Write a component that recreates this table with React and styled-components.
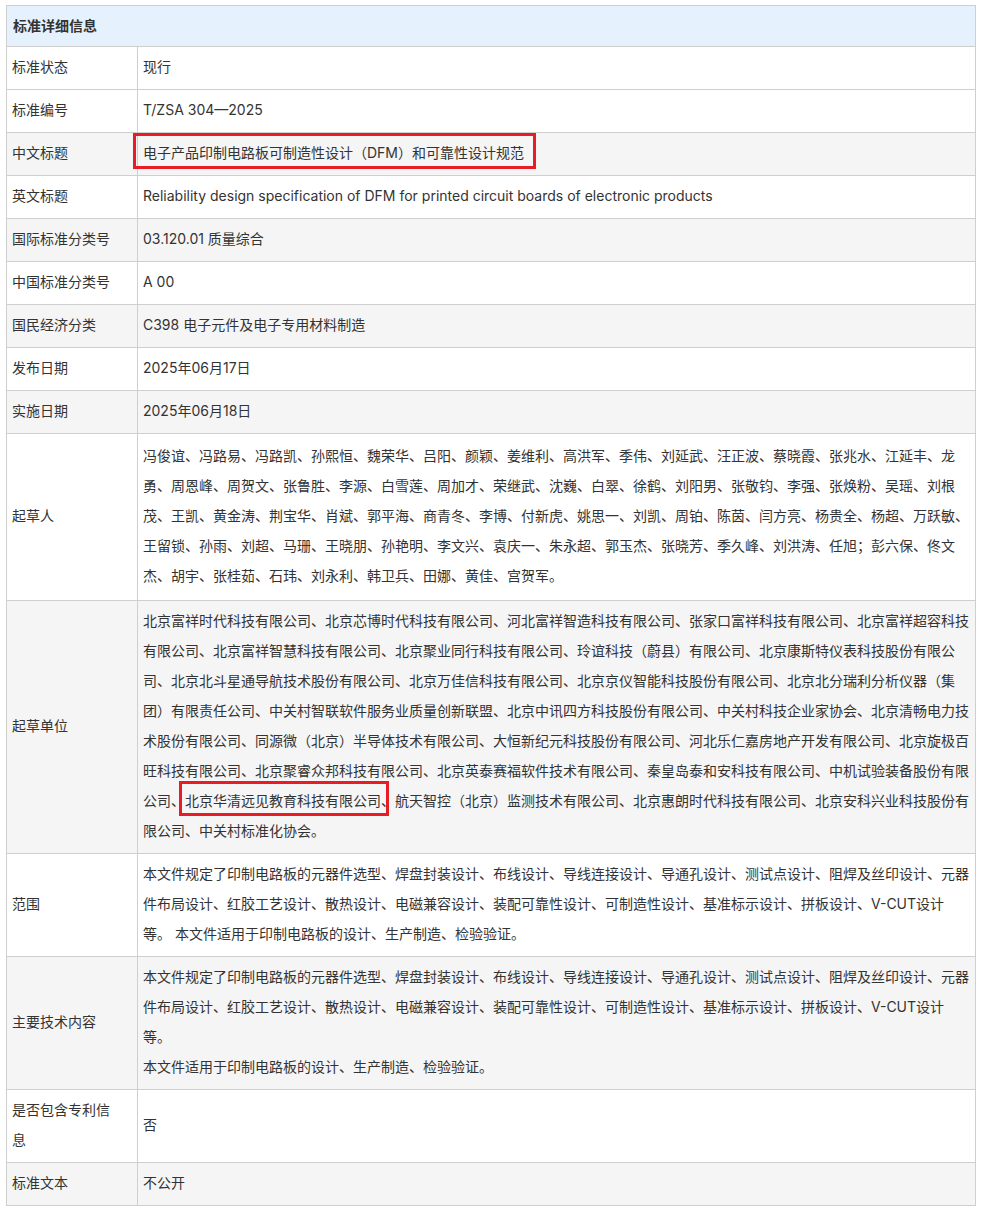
import React from "react";
import styled, { createGlobalStyle } from "styled-components";

const GlobalStyle = createGlobalStyle`
  body {
    margin: 0;
    background: #fff;
    font-family: Inter, "Noto Sans CJK SC", sans-serif;
    color: #333;
  }
`;

const drafters =
  "冯俊谊、冯路易、冯路凯、孙熙恒、魏荣华、吕阳、颜颖、姜维利、高洪军、季伟、刘延武、汪正波、蔡晓霞、张兆水、江延丰、龙勇、周恩峰、周贺文、张鲁胜、李源、白雪莲、周加才、荣继武、沈巍、白翠、徐鹤、刘阳男、张敬钧、李强、张焕粉、吴瑶、刘根茂、王凯、黄金涛、荆宝华、肖斌、郭平海、商青冬、李博、付新虎、姚思一、刘凯、周铂、陈茵、闫方亮、杨贵全、杨超、万跃敏、王留锁、孙雨、刘超、马珊、王晓朋、孙艳明、李文兴、袁庆一、朱永超、郭玉杰、张晓芳、季久峰、刘洪涛、任旭；彭六保、佟文杰、胡宇、张桂茹、石玮、刘永利、韩卫兵、田娜、黄佳、宫贺军。";

const unitsBefore =
  "北京富祥时代科技有限公司、北京芯博时代科技有限公司、河北富祥智造科技有限公司、张家口富祥科技有限公司、北京富祥超容科技有限公司、北京富祥智慧科技有限公司、北京聚业同行科技有限公司、玲谊科技（蔚县）有限公司、北京康斯特仪表科技股份有限公司、北京北斗星通导航技术股份有限公司、北京万佳信科技有限公司、北京京仪智能科技股份有限公司、北京北分瑞利分析仪器（集团）有限责任公司、中关村智联软件服务业质量创新联盟、北京中讯四方科技股份有限公司、中关村科技企业家协会、北京清畅电力技术股份有限公司、同源微（北京）半导体技术有限公司、大恒新纪元科技股份有限公司、河北乐仁嘉房地产开发有限公司、北京旋极百旺科技有限公司、北京聚睿众邦科技有限公司、北京英泰赛福软件技术有限公司、秦皇岛泰和安科技有限公司、中机试验装备股份有限公司、";
const unitsMarked = "北京华清远见教育科技有限公司、";
const unitsAfter =
  "航天智控（北京）监测技术有限公司、北京惠朗时代科技有限公司、北京安科兴业科技股份有限公司、中关村标准化协会。";

const scope =
  "本文件规定了印制电路板的元器件选型、焊盘封装设计、布线设计、导线连接设计、导通孔设计、测试点设计、阻焊及丝印设计、元器件布局设计、红胶工艺设计、散热设计、电磁兼容设计、装配可靠性设计、可制造性设计、基准标示设计、拼板设计、V-CUT设计等。 本文件适用于印制电路板的设计、生产制造、检验验证。";

const Page = styled.div`
  padding: 5px 5px 8px 6px;
`;

const Table = styled.table`
  width: 970px;
  border-collapse: collapse;
  font-size: 14px;
  line-height: 30px;
`;

const HeadCell = styled.th`
  background: #e5f1fd;
  border: 1px solid #cfcfcf;
  height: 39px;
  padding: 0 6px 1px;
  text-align: left;
  font-weight: bold;
  color: #333;
`;

const Row = styled.tr`
  background: ${(p) => (p.$shade ? "#f5f5f5" : "#fff")};
`;

const Label = styled.td`
  width: 111px;
  border: 1px solid #cfcfcf;
  padding: 5px 14px 7px 5px;
  vertical-align: middle;
  color: #333;
`;

const Value = styled.td`
  border: 1px solid #cfcfcf;
  padding: ${(p) => (p.$tall ? "7px 3px 9px 5px" : "5px 3px 7px 5px")};
  vertical-align: middle;
  color: #333;
  word-break: break-all;
`;

// red annotation frame drawn over the text
const Marked = styled.span`
  position: relative;
  &::after {
    content: "";
    position: absolute;
    left: ${(p) => p.$l}px;
    right: ${(p) => p.$r}px;
    top: ${(p) => p.$t}px;
    bottom: ${(p) => p.$b}px;
    border: 3px solid #e81c24;
    pointer-events: none;
  }
`;

const rows = [
  ["标准状态", "现行", false],
  ["标准编号", "T/ZSA 304—2025", false],
  [
    "中文标题",
    <Marked $l={-10} $r={-12} $t={-11} $b={-8}>
      电子产品印制电路板可制造性设计（DFM）和可靠性设计规范
    </Marked>,
    true,
  ],
  [
    "英文标题",
    "Reliability design specification of DFM for printed circuit boards of electronic products",
    false,
  ],
  ["国际标准分类号", "03.120.01 质量综合", true],
  ["中国标准分类号", "A 00", false],
  ["国民经济分类", "C398 电子元件及电子专用材料制造", true],
  ["发布日期", "2025年06月17日", false],
  ["实施日期", "2025年06月18日", true],
];

export default function App() {
  return (
    <Page>
      <GlobalStyle />
      <Table>
        <thead>
          <tr>
            <HeadCell colSpan={2}>标准详细信息</HeadCell>
          </tr>
        </thead>
        <tbody>
          {rows.map(([label, value, shade]) => (
            <Row key={label} $shade={shade}>
              <Label>{label}</Label>
              <Value>{value}</Value>
            </Row>
          ))}
          <Row>
            <Label>起草人</Label>
            <Value $tall>{drafters}</Value>
          </Row>
          <Row $shade>
            <Label>起草单位</Label>
            <Value>
              {unitsBefore}
              <Marked $l={-6} $r={6} $t={-11} $b={-7}>
                {unitsMarked}
              </Marked>
              {unitsAfter}
            </Value>
          </Row>
          <Row>
            <Label>范围</Label>
            <Value>{scope}</Value>
          </Row>
          <Row $shade>
            <Label>主要技术内容</Label>
            <Value>
              本文件规定了印制电路板的元器件选型、焊盘封装设计、布线设计、导线连接设计、导通孔设计、测试点设计、阻焊及丝印设计、元器件布局设计、红胶工艺设计、散热设计、电磁兼容设计、装配可靠性设计、可制造性设计、基准标示设计、拼板设计、V-CUT设计等。
              <br />
              本文件适用于印制电路板的设计、生产制造、检验验证。
            </Value>
          </Row>
          <Row>
            <Label>是否包含专利信息</Label>
            <Value>否</Value>
          </Row>
          <Row $shade>
            <Label>标准文本</Label>
            <Value>不公开</Value>
          </Row>
        </tbody>
      </Table>
    </Page>
  );
}
